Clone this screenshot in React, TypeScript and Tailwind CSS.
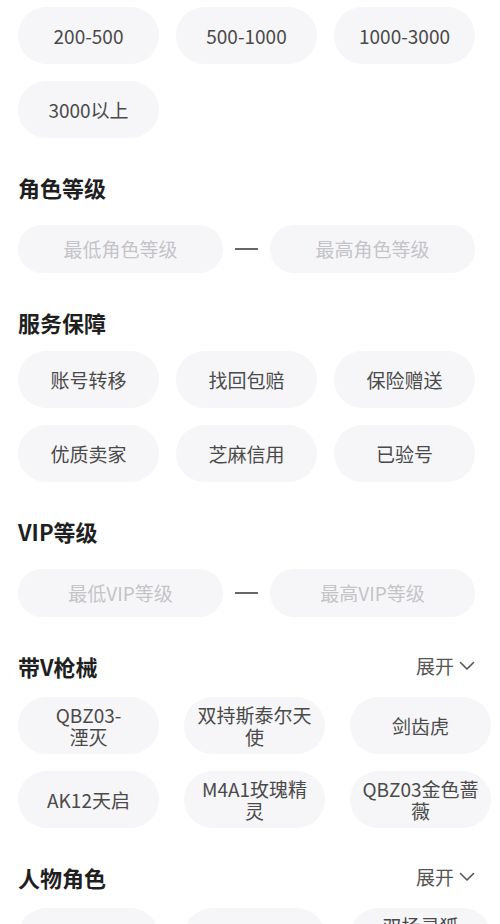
const font = { fontFamily: '"Noto Sans CJK SC", "Noto Sans", sans-serif' }

const prices = ['200-500', '500-1000', '1000-3000', '3000以上']
const services = ['账号转移', '找回包赔', '保险赠送', '优质卖家', '芝麻信用', '已验号']
const weapons = ['QBZ03-\n湮灭', '双持斯泰尔天使', '剑齿虎', 'AK12天启', 'M4A1玫瑰精灵', 'QBZ03金色蔷薇']
const roles = ['', '', '双扬灵狐\n幻影']

function Heading({ title, more }: { title: string; more?: boolean }) {
    return (
        <div className="flex items-center justify-between h-[30px] mt-[34px]">
            <h2 className="text-[22px] font-bold text-[#1f1f1f] leading-[30px]">{title}</h2>
            {more && (
                <button className="flex items-center gap-[5px] text-[19px] text-[#555] leading-[30px]">
                    展开
                    <svg width="16" height="10" viewBox="0 0 16 10" fill="none">
                        <path d="M1.5 1.5 L8 8 L14.5 1.5" stroke="#555" strokeWidth="1.6" strokeLinecap="round" strokeLinejoin="round" />
                    </svg>
                </button>
            )}
        </div>
    )
}

function Pill({ text }: { text: string }) {
    return (
        <div className="h-[57px] rounded-full bg-[#f6f6f8] flex items-center justify-center px-[12px] text-center text-[19px] leading-[22px] text-[#4a4a4a] whitespace-pre-line">
            {text}
        </div>
    )
}

function Range({ low, high }: { low: string; high: string }) {
    return (
        <div className="flex items-center gap-[12px] mt-[23px]">
            <div className="flex-1 h-[48px] rounded-full bg-[#f6f6f8] flex items-center justify-center text-[19px] text-[#c4c4c8]">{low}</div>
            <div className="w-[23px] h-[2px] bg-[#666]"></div>
            <div className="flex-1 h-[48px] rounded-full bg-[#f6f6f8] flex items-center justify-center text-[19px] text-[#c4c4c8]">{high}</div>
        </div>
    )
}

function App() {
    return (
        <div className="w-[500px] h-[924px] overflow-hidden bg-white pl-[18px] pr-[25px] pt-[7px]" style={font}>
            <div className="grid grid-cols-3 gap-x-[17px] gap-y-[17px]">
                {prices.map((p) => <Pill key={p} text={p} />)}
            </div>

            <Heading title="角色等级" />
            <Range low="最低角色等级" high="最高角色等级" />

            <Heading title="服务保障" />
            <div className="grid grid-cols-3 gap-x-[17px] gap-y-[17px] mt-[14px]">
                {services.map((s) => <Pill key={s} text={s} />)}
            </div>

            <Heading title="VIP等级" />
            <Range low="最低VIP等级" high="最高VIP等级" />

            <Heading title="带V枪械" more />
            <div className="grid grid-cols-[141px_141px_141px] gap-x-[25px] gap-y-[17px] mt-[16px]">
                {weapons.map((w) => <Pill key={w} text={w} />)}
            </div>

            <Heading title="人物角色" more />
            <div className="grid grid-cols-[141px_141px_141px] gap-x-[25px] gap-y-[17px] mt-[16px]">
                {roles.map((r, i) => <Pill key={i} text={r} />)}
            </div>
        </div>
    )
}

export default App
